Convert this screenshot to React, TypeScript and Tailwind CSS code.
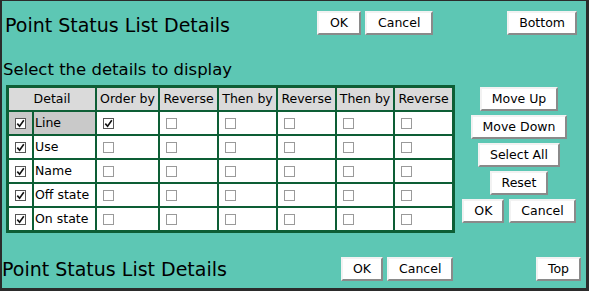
import React from 'react'
import clsx from 'clsx'

const GREEN = 'bg-[#0d5e35]'

function Btn({ children, className }: { children: React.ReactNode; className?: string }) {
  return (
    <button
      className={clsx(
        'h-[24px] px-[10px] bg-white text-black text-[12.5px] leading-none border-2 border-t-[#f2f2f2] border-l-[#f2f2f2] border-r-[#8a8a8a] border-b-[#8a8a8a] whitespace-nowrap',
        className,
      )}
    >
      {children}
    </button>
  )
}

function Box({ checked = false }: { checked?: boolean }) {
  return (
    <span
      className={clsx(
        'inline-flex w-[11px] h-[11px] items-center justify-center bg-white border',
        checked ? 'border-[#555555]' : 'border-[#9a9a9a]',
      )}
    >
      {checked && (
        <svg width="9" height="9" viewBox="0 0 9 9">
          <path d="M1.3 4.6 L3.6 7.2 L7.8 1.3" fill="none" stroke="#111" strokeWidth="1.6" />
        </svg>
      )}
    </span>
  )
}

const headers = ['Order by', 'Reverse', 'Then by', 'Reverse', 'Then by', 'Reverse']
const rows = ['Line', 'Use', 'Name', 'Off state', 'On state']

export default function App() {
  return (
    <div className="w-[589px] h-[291px] bg-[#5dc7b4] border-l-2 border-t border-r-[3px] border-b-[3px] border-[#2b2b2b] font-['DejaVu_Sans',sans-serif] text-black overflow-hidden">
      {/* 상단 제목 줄 */}
      <div className="flex items-start mt-[10px] h-[24px]">
        <div className="w-[315px] pl-[3px] pt-[2px] text-[19px] leading-[24px] whitespace-nowrap">
          Point Status List Details
        </div>
        <div className="flex gap-[4px]">
          <Btn className="px-[11px]">OK</Btn>
          <Btn className="px-[11px]">Cancel</Btn>
        </div>
        <Btn className="ml-auto mr-[9px]">Bottom</Btn>
      </div>

      <div className="mt-[25px] pl-[1px] text-[16.5px] leading-[20px] whitespace-nowrap">
        Select the details to display
      </div>

      <div className="flex items-start mt-[5px]">
        {/* 상세 테이블 */}
        <div
          className={clsx(
            'ml-[4px] grid grid-cols-[23px_61px_61px_57px_57px_57px_56px_57px] auto-rows-[22px] gap-[2px] border-[3px] border-[#0d5e35] text-[12.5px]',
            GREEN,
          )}
        >
          <div className="col-span-2 bg-[#dadada] flex items-center justify-center">Detail</div>
          {headers.map((h, i) => (
            <div key={i} className="bg-[#dadada] flex items-center justify-center whitespace-nowrap">
              {h}
            </div>
          ))}
          {rows.map((label, r) => (
            <React.Fragment key={label}>
              <div className={clsx('flex items-center pl-[6px]', r === 0 ? 'bg-[#c9c9c9]' : 'bg-white')}>
                <Box checked />
              </div>
              <div
                className={clsx(
                  'flex items-center pl-[1px] whitespace-nowrap',
                  r === 0 ? 'bg-[#c9c9c9]' : 'bg-white',
                )}
              >
                {label}
              </div>
              {headers.map((_, c) => (
                <div key={c} className="bg-white flex items-center pl-[6px]">
                  <Box checked={r === 0 && c === 0} />
                </div>
              ))}
            </React.Fragment>
          ))}
        </div>

        {/* 오른쪽 버튼 */}
        <div className="flex-1 flex flex-col items-center gap-[4px] pt-[2px] pr-[3px]">
          <Btn>Move Up</Btn>
          <Btn>Move Down</Btn>
          <Btn>Select All</Btn>
          <Btn>Reset</Btn>
          <div className="flex gap-[5px]">
            <Btn>OK</Btn>
            <Btn>Cancel</Btn>
          </div>
        </div>
      </div>

      {/* 하단 제목 줄 */}
      <div className="flex items-start mt-[24px] h-[24px]">
        <div className="w-[339px] text-[19px] leading-[24px] whitespace-nowrap">Point Status List Details</div>
        <div className="flex gap-[4px]">
          <Btn>OK</Btn>
          <Btn>Cancel</Btn>
        </div>
        <Btn className="ml-auto mr-[5px]">Top</Btn>
      </div>
    </div>
  )
}
